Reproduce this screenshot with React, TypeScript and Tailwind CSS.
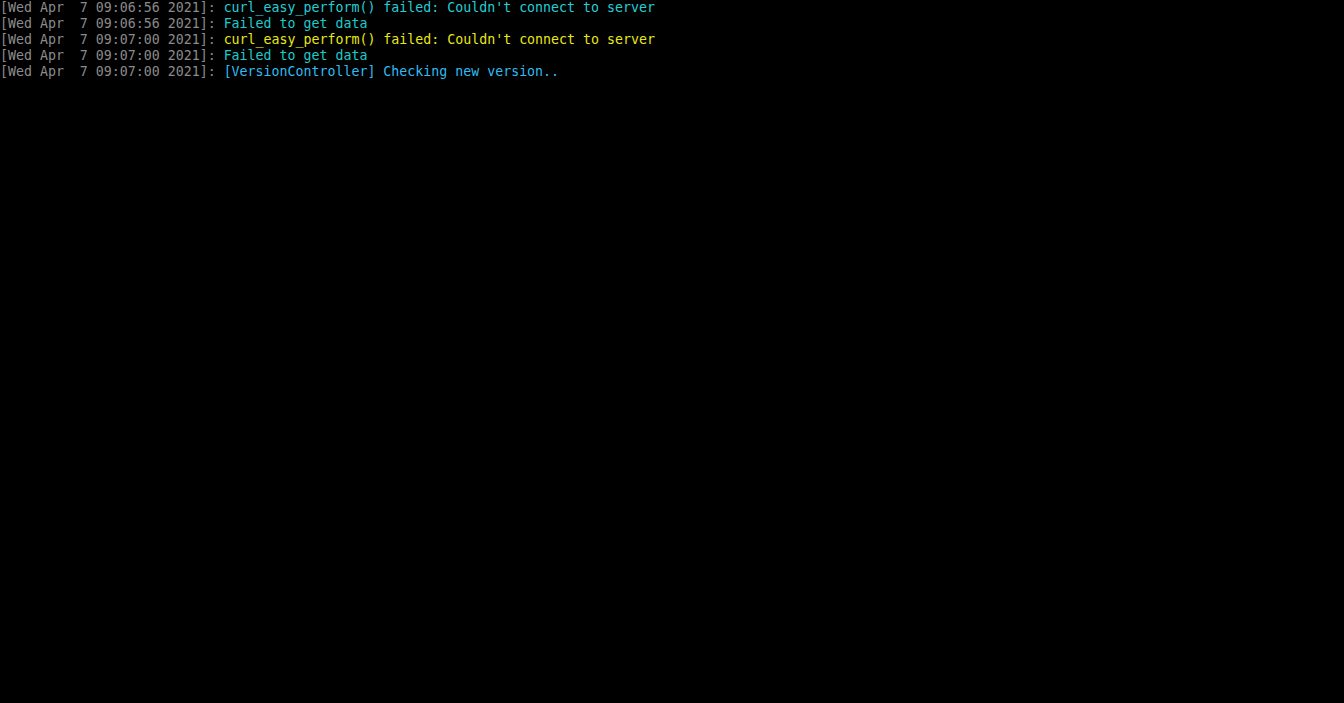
import React from 'react'

// console log lines: timestamp prefix + coloured message
const lines = [
  { time: '[Wed Apr  7 09:06:56 2021]: ', msg: "curl_easy_perform() failed: Couldn't connect to server", color: 'text-[#22cfd6]' },
  { time: '[Wed Apr  7 09:06:56 2021]: ', msg: 'Failed to get data', color: 'text-[#1ccccc]' },
  { time: '[Wed Apr  7 09:07:00 2021]: ', msg: "curl_easy_perform() failed: Couldn't connect to server", color: 'text-[#e8e812]' },
  { time: '[Wed Apr  7 09:07:00 2021]: ', msg: 'Failed to get data', color: 'text-[#1ccccc]' },
  { time: '[Wed Apr  7 09:07:00 2021]: ', msg: '[VersionController] Checking new version..', color: 'text-[#30bcf2]' },
]

export default function App() {
  return (
    <div className="w-[1344px] h-[703px] bg-black overflow-hidden font-['DejaVu_Sans_Mono',monospace] text-[13.28px] leading-[16px]">
      {lines.map((l, i) => (
        <div key={i} className="whitespace-pre h-4">
          <span className="text-[#8c8c8c]">{l.time}</span>
          <span className={l.color}>{l.msg}</span>
        </div>
      ))}
    </div>
  )
}
